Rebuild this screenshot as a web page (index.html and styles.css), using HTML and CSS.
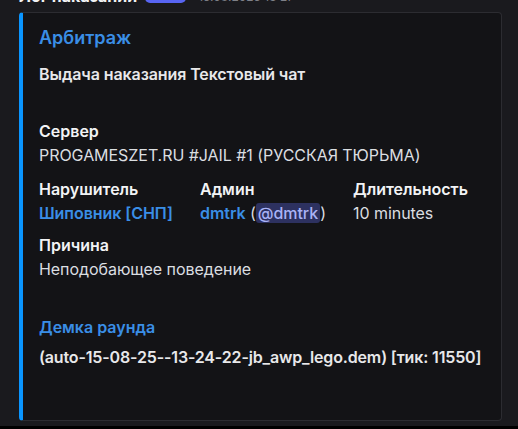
FILE: index.html
```html
<!DOCTYPE html>
<html lang="ru">
<head>
<meta charset="utf-8">
<link rel="stylesheet" href="styles.css">
</head>
<body>
<div class="page">
  <div class="header">
    <span class="author">Лог наказаний</span>
    <span class="badge">APP</span>
    <span class="time">15.08.2025 13:27</span>
  </div>
  <div class="card">
    <div class="title">Арбитраж</div>
    <div class="desc">Выдача наказания Текстовый чат</div>
    <div class="fields">
      <div class="field full">
        <div class="fname">Сервер</div>
        <div class="fvalue">PROGAMESZET.RU #JAIL #1 (РУССКАЯ ТЮРЬМА)</div>
      </div>
      <div class="field row2">
        <div class="fname">Нарушитель</div>
        <div class="fvalue"><span class="link">Шиповник [СНП]</span></div>
      </div>
      <div class="field row2">
        <div class="fname">Админ</div>
        <div class="fvalue"><span class="link">dmtrk</span> (<span class="mention">@dmtrk</span>)</div>
      </div>
      <div class="field row2">
        <div class="fname">Длительность</div>
        <div class="fvalue">10 minutes</div>
      </div>
      <div class="field full row3">
        <div class="fname">Причина</div>
        <div class="fvalue">Неподобающее поведение</div>
      </div>
      <div class="field full demo">
        <div class="fname blue">Демка раунда</div>
        <div class="fvalue bold">(auto-15-08-25--13-24-22-jb_awp_lego.dem) [тик: 11550]</div>
      </div>
    </div>
  </div>
</div>
<div class="bottom-strip"></div>
</body>
</html>
```

FILE: styles.css
```css
html, body {
  margin: 0;
  padding: 0;
  background: #1a1a1e;
  font-family: Inter, "Noto Sans", sans-serif;
  overflow: hidden;
}

.page {
  padding: 0 16px 5px 19px;
}

.header {
  display: flex;
  align-items: center;
  gap: 8px;
  height: 22px;
  margin-top: -15px;
  margin-bottom: 5px;
}

.author {
  font-size: 16px;
  font-weight: 700;
  color: #f2f3f5;
  line-height: 22px;
}

.badge {
  background: #5865f2;
  color: #5865f2;
  font-size: 10px;
  line-height: 16px;
  height: 16px;
  width: 41px;
  border-radius: 5px;
  margin-top: -2px;
  text-align: center;
}

.time {
  font-size: 12px;
  color: #7e8088;
  margin-left: 4px;
}

.card {
  background: #131316;
  border: 1px solid #2c2c31;
  border-left: 4px solid #0a95ff;
  border-radius: 4px;
  padding: 13px 16px 51px 16px;
}

.title {
  font-size: 18px;
  font-weight: 600;
  line-height: 24px;
  color: #3a8ee6;
}

.desc {
  margin-top: 13px;
  font-size: 16px;
  font-weight: 600;
  line-height: 22px;
  color: #e8e8ea;
  letter-spacing: -0.1px;
}

.fields {
  margin-top: 34px;
  display: grid;
  grid-template-columns: 161px 153px 1fr;
}

.field.full {
  grid-column: 1 / -1;
}

.field.row2 {
  margin-top: 10px;
}

.field.row3 {
  margin-top: 8px;
}

.field.demo {
  margin-top: 34px;
}

.field.demo .fvalue {
  margin-top: 6px;
}

.fname {
  font-size: 16px;
  font-weight: 600;
  line-height: 24px;
  color: #f2f3f5;
}

.fname.blue {
  color: #3a8ee6;
}

.fvalue {
  font-size: 16px;
  font-weight: 400;
  line-height: 24px;
  color: #dbdee1;
  white-space: nowrap;
  letter-spacing: -0.05px;
}

.fvalue.bold {
  font-weight: 600;
  color: #e8e8ea;
  letter-spacing: -0.15px;
}

.link {
  color: #3a8ee6;
  font-weight: 600;
}

.mention {
  background: #2d3160;
  color: #a9b3f7;
  border-radius: 3px;
  padding: 0 2px;
  font-weight: 500;
}

.bottom-strip {
  height: 10px;
  background: #000000;
}
```
